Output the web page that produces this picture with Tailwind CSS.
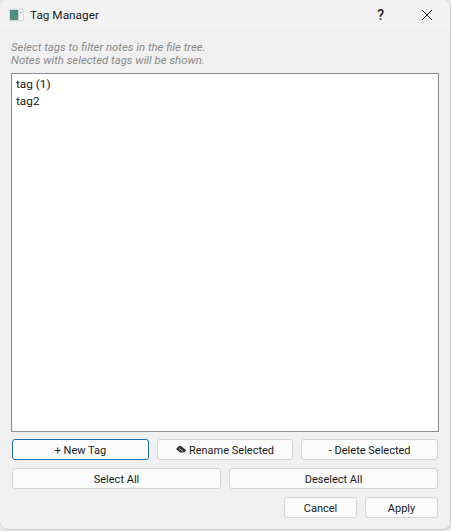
<!DOCTYPE html>
<html lang="en-us">
<head>
<meta charset="UTF-8">
<title>Tag Manager</title>
<script src="https://cdn.jsdelivr.net/npm/@tailwindcss/browser@4"></script>
</head>
<body class="w-[451px] h-[531px] overflow-hidden bg-[#e8e8e8] font-['Roboto','Noto_Sans',sans-serif] text-[11px] text-[#1a1a1a]">
  <div class="flex flex-col h-[530px] w-[451px] rounded-lg overflow-hidden border-r border-b border-[#c8c8c8] bg-[#f0f0f0]">
    <header class="flex items-center h-[30px] flex-none bg-[#f3f3f3] pl-[9px]">
      <svg class="flex-none" width="15" height="14" viewBox="0 0 15 14">
        <rect x="0" y="0.5" width="15" height="13" fill="#d5dadb"/>
        <rect x="1" y="2" width="8" height="10" fill="#4f8c80"/>
        <rect x="10" y="2" width="4" height="10" fill="#f4f6f6"/>
        <rect x="11" y="4" width="2" height="1" fill="#8aa5a0"/>
      </svg>
      <span class="ml-[6px] pt-[2px] text-[11.8px]">Tag Manager</span>
      <span class="ml-auto mr-[37px] text-[14px] font-medium">?</span>
      <svg class="mr-[17px]" width="12" height="12" viewBox="0 0 12 12" fill="none" stroke="#222" stroke-width="1">
        <path d="M1 1L11 11M11 1L1 11"/>
      </svg>
    </header>
    <main class="flex flex-col flex-1 pl-[11px] pr-[11px]">
      <p class="mt-[11px] text-[11.4px] leading-[13px] italic text-[#8a8a8a]">Select tags to filter notes in the file tree.<br>Notes with selected tags will be shown.</p>
      <ul class="mt-[6px] h-[359px] border border-[#8c8c8c] bg-white px-1 pt-[2px] text-[11.8px] leading-[17px]">
        <li>tag (1)</li>
        <li>tag2</li>
      </ul>
      <div class="flex gap-2 mt-[7px] px-px">
        <button class="flex-1 h-[21px] pt-[3px] rounded-[3px] border border-[#1a73b0] bg-[#fbfbfb]">+ New Tag</button>
        <button class="flex-1 flex items-center justify-center gap-[3px] h-[21px] pt-[3px] rounded-[3px] border border-[#d4d4d4] bg-[#fbfbfb]">
          <svg class="-mt-[3px]" width="10" height="7" viewBox="0 0 10 7" fill="#333">
            <path d="M3 0L5 0L10 4L8.5 6.5L4 6.5L0 3Z"/>
            <path d="M3 2.5L7 5.5" stroke="#fff" stroke-width="0.7"/>
          </svg>
          Rename Selected
        </button>
        <button class="flex-1 h-[21px] pt-[3px] rounded-[3px] border border-[#d4d4d4] bg-[#fbfbfb]">- Delete Selected</button>
      </div>
      <div class="flex gap-2 mt-2 px-px">
        <button class="flex-1 h-[21px] pt-[3px] rounded-[3px] border border-[#d4d4d4] bg-[#fbfbfb]">Select All</button>
        <button class="flex-1 h-[21px] pt-[3px] rounded-[3px] border border-[#d4d4d4] bg-[#fbfbfb]">Deselect All</button>
      </div>
      <div class="flex justify-end gap-2 mt-2 px-px">
        <button class="w-[73px] h-[21px] pt-[3px] rounded-[3px] border border-[#d4d4d4] bg-[#fbfbfb]">Cancel</button>
        <button class="w-[73px] h-[21px] pt-[3px] rounded-[3px] border border-[#d4d4d4] bg-[#fbfbfb]">Apply</button>
      </div>
    </main>
  </div>
</body>
</html>
